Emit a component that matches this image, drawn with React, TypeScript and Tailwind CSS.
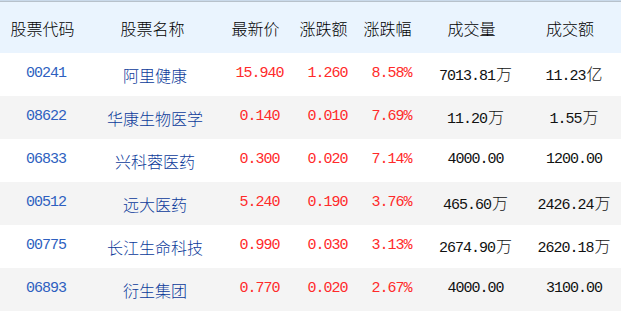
import React from "react";

const rows = [
  ["00241", "阿里健康", "15.940", "1.260", "8.58%", "7013.81", "万", "11.23", "亿"],
  ["08622", "华康生物医学", "0.140", "0.010", "7.69%", "11.20", "万", "1.55", "万"],
  ["06833", "兴科蓉医药", "0.300", "0.020", "7.14%", "4000.00", "", "1200.00", ""],
  ["00512", "远大医药", "5.240", "0.190", "3.76%", "465.60", "万", "2426.24", "万"],
  ["00775", "长江生命科技", "0.990", "0.030", "3.13%", "2674.90", "万", "2620.18", "万"],
  ["06893", "衍生集团", "0.770", "0.020", "2.67%", "4000.00", "", "3100.00", ""],
];

const headers = ["股票代码", "股票名称", "最新价", "涨跌额", "涨跌幅", "成交量", "成交额"];

const grid = "grid grid-cols-[90px_130px_76px_60px_68px_100px_97px] items-center";
const mono = "font-['Liberation_Mono',monospace] text-[15px] tracking-[-1px]";
const cjk = "font-['Noto_Sans_CJK_SC',sans-serif] text-[16px] font-light";

function Num({ v, u, color }: { v: string; u: string; color: string }) {
  return (
    <div className={`flex items-baseline justify-center pl-[3px] ${color}`}>
      <span className={mono}>{v}</span>
      {u && <span className={`${cjk} ml-px`}>{u}</span>}
    </div>
  );
}

export default function App() {
  return (
    <div className="w-[621px] h-[311px] overflow-hidden bg-white">
      <div className="h-px bg-[#c9d9ea]" />
      <div className="h-px bg-[#b7c1cb]" />
      <div className={`${grid} h-[51px] bg-[#eaf4fe] ${cjk} text-black`}>
        {headers.map((h, i) => (
          <div key={i} className="text-center pr-[5px]">
            {h}
          </div>
        ))}
      </div>
      {rows.map((r, i) => (
        <div key={i} className={`${grid} h-[43px] ${i % 2 === 1 ? "bg-[#f4f4f4]" : "bg-white"}`}>
          <div className={`text-center pl-[2px] text-[#2e5fc0] ${mono}`}>{r[0]}</div>
          <div className={`text-center text-[#0b3a9a] ${cjk}`}>{r[1]}</div>
          <Num v={r[2]} u="" color="text-[#ff2a2a]" />
          <Num v={r[3]} u="" color="text-[#ff2a2a]" />
          <Num v={r[4]} u="" color="text-[#ff2a2a]" />
          <Num v={r[5]} u={r[6]} color="text-[#111]" />
          <Num v={r[7]} u={r[8]} color="text-[#111]" />
        </div>
      ))}
    </div>
  );
}
